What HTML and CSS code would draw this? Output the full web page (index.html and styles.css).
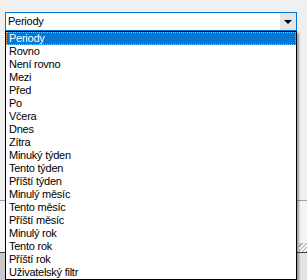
FILE: index.html
```html
<!DOCTYPE html>
<html lang="cs">
<head>
    <meta charset="UTF-8">
    <title>Periody</title>
    <link rel="stylesheet" href="styles.css">
</head>
<body>
<div class="combo">
    <div class="combo-text">Periody</div>
    <div class="combo-btn"><span class="arrow"></span></div>
</div>

<div class="pane"></div>
<div class="pane-bottom">
    <div class="grip"></div>
</div>
<div class="footer"></div>

<!-- rozbalený seznam -->
<ul class="drop-list">
    <li class="selected">Periody</li>
    <li>Rovno</li>
    <li>Není rovno</li>
    <li>Mezi</li>
    <li>Před</li>
    <li>Po</li>
    <li>Včera</li>
    <li>Dnes</li>
    <li>Zítra</li>
    <li>Minuký týden</li>
    <li>Tento týden</li>
    <li>Příští týden</li>
    <li>Minulý měsíc</li>
    <li>Tento měsíc</li>
    <li>Příští měsíc</li>
    <li>Minulý rok</li>
    <li>Tento rok</li>
    <li>Příští rok</li>
    <li>Uživatelský filtr</li>
</ul>
</body>
</html>
```

FILE: styles.css
```css
body {
    margin: 0;
    height: 280px;
    overflow: hidden;
    background: #f0f0f0;
    font-family: "Liberation Sans", Arial, sans-serif;
    font-size: 11px;
    letter-spacing: -0.25px;
    color: #000;
}

.combo {
    display: flex;
    box-sizing: border-box;
    width: 292px;
    height: 19px;
    margin: 12px 0 0 5px;
    border: 1px solid #0078d7;
    background: #fff;
}

.combo-text {
    flex: 1;
    padding-left: 2px;
    line-height: 17px;
}

.combo-btn {
    display: flex;
    align-items: center;
    justify-content: center;
    width: 16px;
    background: #e5e5e5;
}

.arrow {
    width: 0;
    height: 0;
    border-left: 4px solid transparent;
    border-right: 4px solid transparent;
    border-top: 4px solid #000;
}

.pane {
    height: 169px;
    border-bottom: 1px solid #a0a0a0;
}

.pane-bottom {
    display: flex;
    justify-content: flex-end;
    align-items: flex-end;
    height: 51px;
    background: #f4f4f4;
    border-bottom: 1px solid #404040;
}

.grip {
    width: 8px;
    height: 9px;
    background: repeating-linear-gradient(135deg, #f4f4f4 0 2px, #a0a0a0 2px 3px);
}

.footer {
    height: 27px;
    background: linear-gradient(to right, #c8c8c8, #d8d8d8 40%, #e4e4e4);
}

.drop-list {
    position: absolute;
    top: 31px;
    left: 5px;
    width: 292px;
    box-sizing: border-box;
    margin: 0;
    padding: 0;
    list-style: none;
    background: #fff;
    border: 1px solid #000;
    box-shadow: 2px 2px 2px rgba(0, 0, 0, 0.35);
}

.drop-list li {
    height: 13px;
    line-height: 13px;
    padding-left: 3px;
    white-space: nowrap;
}

.drop-list .selected {
    box-sizing: border-box;
    padding-left: 2px;
    line-height: 11px;
    background: #0078d7;
    color: #fff;
    border: 1px dotted #f7a43a;
}
```
